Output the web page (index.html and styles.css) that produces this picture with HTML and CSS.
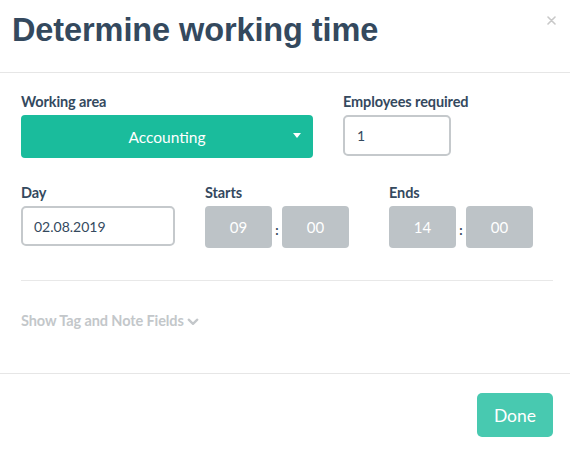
FILE: index.html
```html
<!DOCTYPE html>
<html>
<head>
<meta charset="utf-8">
<link rel="stylesheet" href="styles.css">
</head>
<body>
<div class="modal">
  <header class="modal-header">
    <h1 class="title">Determine working time</h1>
    <button class="close" aria-label="Close">
      <svg width="9" height="9" viewBox="0 0 9 9"><path d="M1 1L8 8M8 1L1 8" stroke="#c8c8c8" stroke-width="1.6" stroke-linecap="round"/></svg>
    </button>
  </header>
  <div class="modal-body">
    <div class="row row-top">
      <div class="field field-area">
        <label class="label">Working area</label>
        <div class="select">
          <span>Accounting</span>
          <svg class="caret" width="8" height="5" viewBox="0 0 8 5"><path d="M0 0H8L4 5Z" fill="#fff"/></svg>
        </div>
      </div>
      <div class="field field-emp">
        <label class="label">Employees required</label>
        <div class="input input-emp">1</div>
      </div>
    </div>
    <div class="row row-time">
      <div class="field field-day">
        <label class="label">Day</label>
        <div class="input input-day">02.08.2019</div>
      </div>
      <div class="field field-starts">
        <label class="label">Starts</label>
        <div class="time">
          <div class="tbox">09</div><span class="colon">:</span><div class="tbox">00</div>
        </div>
      </div>
      <div class="field field-ends">
        <label class="label">Ends</label>
        <div class="time">
          <div class="tbox">14</div><span class="colon">:</span><div class="tbox">00</div>
        </div>
      </div>
    </div>
    <hr class="divider">
    <div class="toggle">Show Tag and Note Fields
      <svg class="chev" width="12" height="8" viewBox="0 0 12 8"><path d="M1.7 1.7L6 5.8L10.3 1.7" fill="none" stroke="#c3c7ca" stroke-width="2.3" stroke-linecap="round" stroke-linejoin="round"/></svg>
    </div>
  </div>
  <footer class="modal-footer">
    <button class="done">Done</button>
  </footer>
</div>
</body>
</html>
```
FILE: styles.css
```css
* { box-sizing: border-box; }
html, body { margin: 0; padding: 0; background: #fff; }
body { font-family: Lato, "Noto Sans", sans-serif; color: #34495e; width: 570px; }

.modal-header {
  position: relative;
  height: 73px;
  border-bottom: 1px solid #e6e6e6;
  padding: 10px 0 0 12px;
}
.title {
  margin: 0;
  font-family: "Liberation Sans", Arial, sans-serif;
  font-weight: bold;
  font-size: 32.5px;
  line-height: 40px;
  color: #34495e;
  letter-spacing: -0.1px;
}
.close {
  position: absolute;
  top: 15px;
  right: 13px;
  border: 0;
  background: none;
  padding: 0;
  width: 11px;
  height: 11px;
  display: flex;
  align-items: center;
  justify-content: center;
}

.modal-body {
  padding: 20px 17px 0 21px;
  height: 301px;
  border-bottom: 1px solid #e6e6e6;
}
.row { display: flex; }
.row-top { gap: 30px; }
.row-time { margin-top: 26px; }
.field { display: flex; flex-direction: column; }
.label {
  font-size: 14.5px;
  font-weight: bold;
  line-height: 17px;
  margin-bottom: 5px;
  color: #34495e;
  letter-spacing: -0.1px;
}
.field-area { width: 292px; }
.select {
  position: relative;
  height: 43px;
  background: #1abc9c;
  border-radius: 4px;
  color: #fff;
  font-size: 15.5px;
  display: flex;
  align-items: center;
  justify-content: center;
}
.caret { position: absolute; right: 12px; top: 18px; }

.input {
  border: 2px solid #c5c9cc;
  border-radius: 5px;
  font-size: 14px;
  color: #34495e;
  display: flex;
  align-items: center;
}
.input-emp { width: 108px; height: 41px; padding-left: 12px; }
.field-day { width: 154px; margin-right: 30px; }
.input-day { width: 154px; height: 40px; padding-left: 11px; }
.field-starts { margin-right: 40px; }

.time { display: flex; align-items: center; }
.tbox {
  width: 67px;
  height: 42px;
  background: #bdc3c7;
  border-radius: 4px;
  color: #fff;
  font-size: 15px;
  display: flex;
  align-items: center;
  justify-content: center;
}
.colon {
  width: 10px;
  text-align: center;
  font-size: 13px;
  font-weight: bold;
  color: #34495e;
  padding-top: 6px;
}

.divider {
  border: 0;
  border-top: 1px solid #e8e8e8;
  margin: 32px 0 0 0;
}
.toggle {
  margin-top: 31px;
  font-size: 14.5px;
  font-weight: bold;
  line-height: 17px;
  color: #c3c7ca;
  letter-spacing: -0.1px;
  display: flex;
  align-items: center;
  gap: 3px;
}
.chev { margin-top: 2px; }

.modal-footer {
  display: flex;
  justify-content: flex-end;
  padding: 19px 17px 0 0;
}
.done {
  width: 76px;
  height: 44px;
  border: 0;
  border-radius: 5px;
  background: #48c9b0;
  color: #fff;
  font-family: Lato, sans-serif;
  font-size: 17.5px;
  padding: 0;
}
```
